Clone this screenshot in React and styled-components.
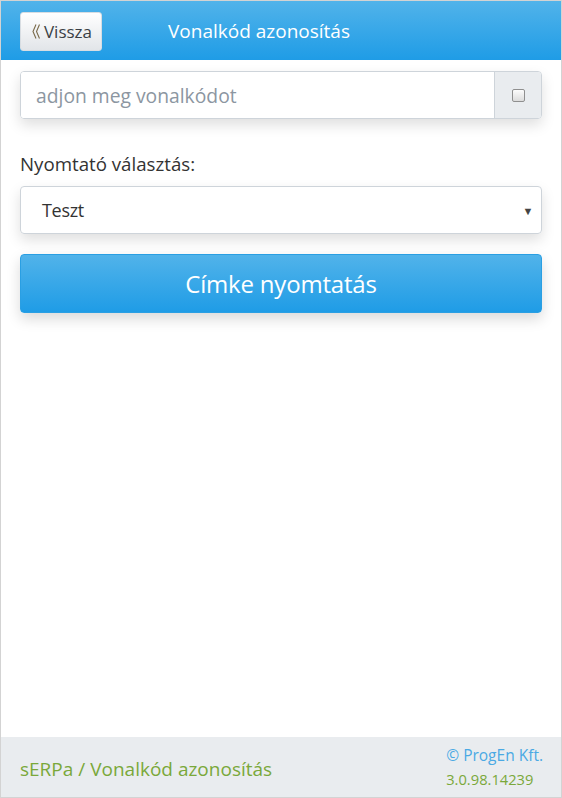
import React from 'react'
import styled, { createGlobalStyle } from 'styled-components'

const Global = createGlobalStyle`
  html, body { margin: 0; padding: 0; }
  body { font-family: "Open Sans", "Noto Sans", sans-serif; color: #333; }
  * { box-sizing: border-box; }
`

const Page = styled.div`
  width: 562px;
  height: 798px;
  border: 1px solid #d3d3d3;
  display: flex;
  flex-direction: column;
  background: #fff;
`

const Header = styled.div`
  height: 59px;
  flex-shrink: 0;
  display: flex;
  align-items: center;
  padding: 0 19px;
  background: linear-gradient(#51b3ea, #1f9ce6);
`

const BackButton = styled.button`
  height: 39px;
  width: 82px;
  margin-top: 1px;
  padding: 0 0 0 2px;
  border: 1px solid #d8dde2;
  border-radius: 3px;
  background: linear-gradient(#ffffff, #e2e5e9);
  font-family: inherit;
  font-size: 17px;
  color: #3a3f45;
  display: flex;
  align-items: center;
  justify-content: center;
  gap: 4px;
`

const Content = styled.div`
  padding: 11px 19px 0;
  display: flex;
  flex-direction: column;
`

const Title = styled.div`
  margin-left: 66px;
  color: #fff;
  font-size: 19px;
`

const InputGroup = styled.div`
  display: flex;
  height: 48px;
  border: 1px solid #ced4da;
  border-radius: 4px;
  overflow: hidden;
  box-shadow: 0 6px 14px rgba(0, 0, 0, 0.13);
`

const TextInput = styled.input`
  flex: 1;
  border: 0;
  outline: none;
  padding: 0 15px;
  font-family: inherit;
  font-size: 19.3px;
  color: #333;
  &::placeholder { color: #8c96a1; }
`

const Addon = styled.div`
  width: 47px;
  background: #e9ecef;
  border-left: 1px solid #ced4da;
  display: flex;
  align-items: center;
  justify-content: center;
`

const Check = styled.span`
  width: 13px;
  height: 13px;
  border: 1px solid #8f8f8f;
  border-radius: 2px;
  background: linear-gradient(#fcfcfc, #dcdcdc);
`

const Label = styled.div`
  margin-top: 32px;
  font-size: 18.7px;
  color: #333;
`

const Select = styled.div`
  margin-top: 10px;
  height: 48px;
  border: 1px solid #ced4da;
  border-radius: 4px;
  display: flex;
  align-items: center;
  padding: 0 8px 0 21px;
  font-size: 18px;
  color: #333;
  box-shadow: 0 6px 14px rgba(0, 0, 0, 0.13);
  letter-spacing: -0.3px;
`

const SelectText = styled.span`
  flex: 1;
`

const Arrow = styled.span`
  font-size: 11px;
  color: #444;
`

const PrintButton = styled.button`
  margin-top: 20px;
  height: 59px;
  border: 1px solid #2a9fe3;
  border-radius: 4px;
  background: linear-gradient(#51b3ea, #1f9ce6);
  color: #fff;
  font-family: inherit;
  font-size: 24px;
  letter-spacing: -0.2px;
  box-shadow: 0 6px 14px rgba(0, 0, 0, 0.15);
`

const Footer = styled.div`
  margin-top: auto;
  height: 60px;
  background: #e9ecef;
  display: flex;
  align-items: center;
  justify-content: space-between;
  padding: 0 18px 0 19px;
`

const Crumb = styled.div`
  color: #7aa83a;
  font-size: 19px;
  margin-top: 4px;
`

const Info = styled.div`
  display: flex;
  flex-direction: column;
  align-items: flex-start;
  line-height: 24px;
`

const Company = styled.div`
  color: #4aa9e4;
  font-size: 15.5px;
`

const Version = styled.div`
  color: #7aa83a;
  font-size: 14.7px;
`

function DoubleChevron() {
  return (
    <svg width="8" height="15" viewBox="0 0 8 15" fill="none" stroke="#7a6a4a" strokeWidth="1.1">
      <polyline points="4,0.5 1,7.5 4,14.5" />
      <polyline points="7.5,0.5 4.5,7.5 7.5,14.5" />
    </svg>
  )
}

export default function App() {
  return (
    <>
      <Global />
      <Page>
        <Header>
          <BackButton>
            <DoubleChevron />
            Vissza
          </BackButton>
          <Title>Vonalkód azonosítás</Title>
        </Header>
        <Content>
          <InputGroup>
            <TextInput placeholder="adjon meg vonalkódot" />
            <Addon>
              <Check />
            </Addon>
          </InputGroup>
          <Label>Nyomtató választás:</Label>
          <Select>
            <SelectText>Teszt</SelectText>
            <Arrow>▼</Arrow>
          </Select>
          <PrintButton>Címke nyomtatás</PrintButton>
        </Content>
        <Footer>
          <Crumb>sERPa / Vonalkód azonosítás</Crumb>
          <Info>
            <Company>© ProgEn Kft.</Company>
            <Version>3.0.98.14239</Version>
          </Info>
        </Footer>
      </Page>
    </>
  )
}
